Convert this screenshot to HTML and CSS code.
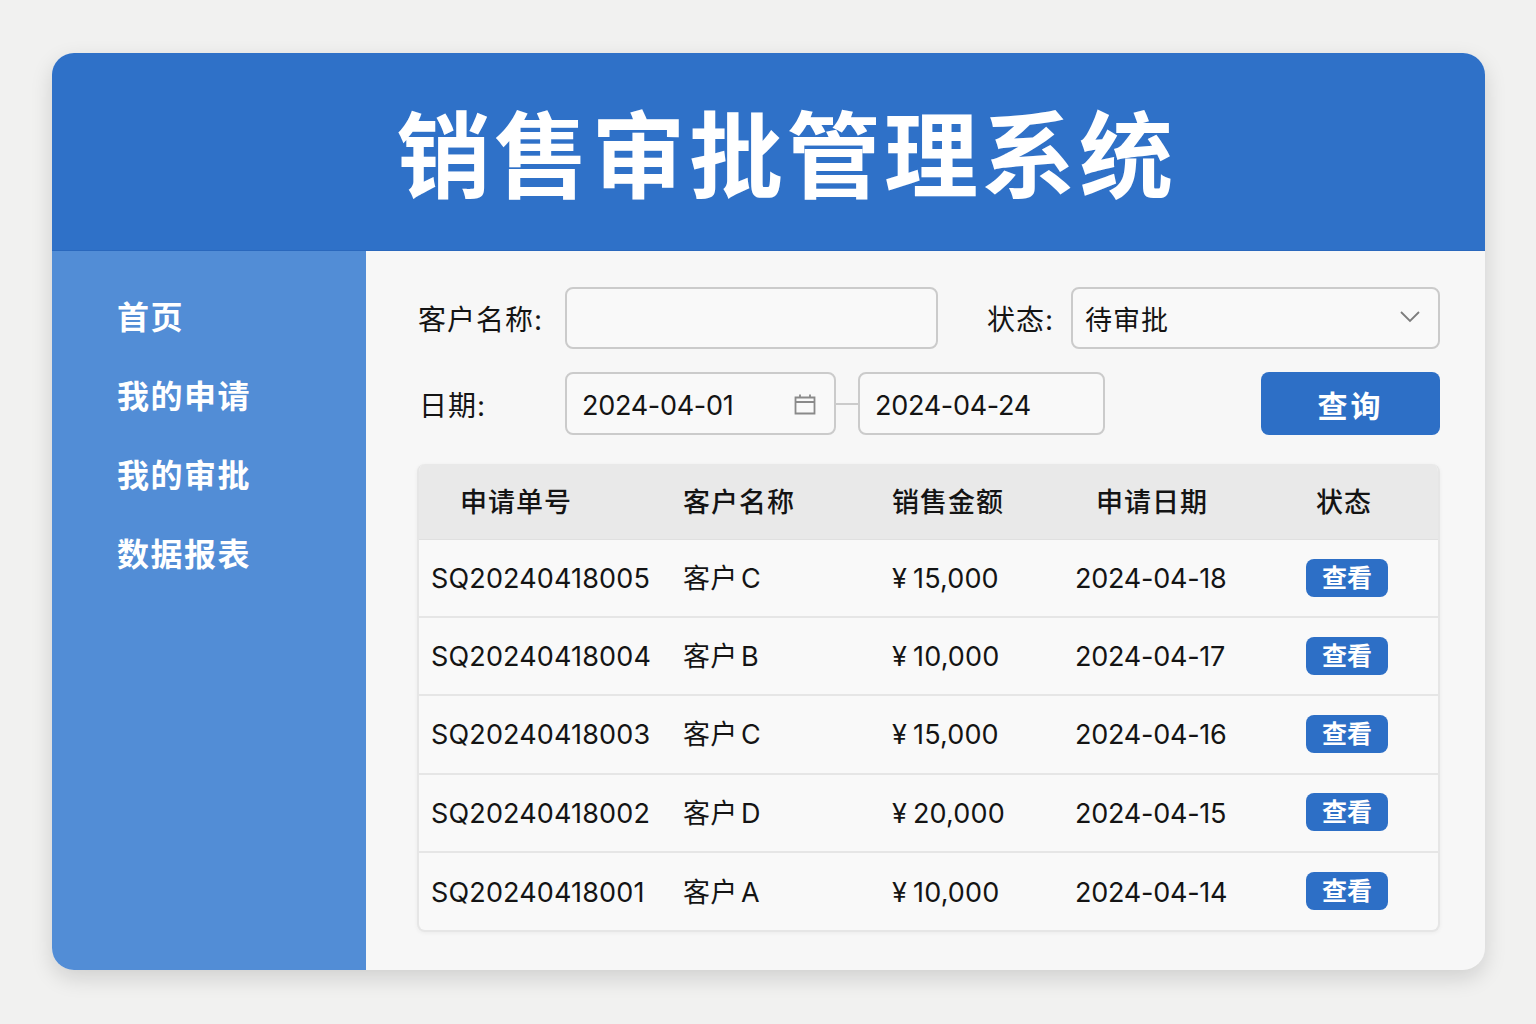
FILE: index.html
```html
<!DOCTYPE html>
<html lang="zh-CN">
<head>
    <meta charset="UTF-8">
    <meta name="viewport" content="width=device-width, initial-scale=1.0">
    <title>销售审批管理系统</title>
    <link rel="stylesheet" href="styles.css">
</head>
<body>
    <div class="app">
        <header class="app-header">
            <h1>销售审批管理系统</h1>
        </header>
        <div class="app-body">
            <nav class="sidebar">
                <a href="#">首页</a>
                <a href="#">我的申请</a>
                <a href="#">我的审批</a>
                <a href="#">数据报表</a>
            </nav>
            <main class="content">
                <div class="filter-row">
                    <label class="filter-label">客户名称:</label>
                    <div class="field field-name"></div>
                    <label class="filter-label label-status">状态:</label>
                    <div class="field field-status">
                        <span>待审批</span>
                        <svg width="24" height="14" viewBox="0 0 24 14"><path d="M3 2l9 9 9-9" fill="none" stroke="#7d7d7d" stroke-width="1.8"/></svg>
                    </div>
                </div>
                <div class="filter-row">
                    <label class="filter-label label-date">日期:</label>
                    <div class="field field-start">
                        <span>2024-04-01</span>
                        <svg width="24" height="24" viewBox="0 0 24 24"><path d="M2.5 5.5h19v16h-19zM2.500 10h19M7 2.500v3M17 2.500v3" fill="none" stroke="#8a8a8a" stroke-width="1.8"/></svg>
                    </div>
                    <div class="date-dash"></div>
                    <div class="field field-end"><span>2024-04-24</span></div>
                    <button type="button" class="btn-search">查询</button>
                </div>
                <div class="table">
                    <div class="row row-head">
                        <div class="col-id">申请单号</div>
                        <div>客户名称</div>
                        <div>销售金额</div>
                        <div class="col-date">申请日期</div>
                        <div class="col-status">状态</div>
                    </div>
                    <div class="row">
                        <div class="col-num">SQ20240418005</div>
                        <div>客户 C</div>
                        <div><span class="yen">¥</span>15,000</div>
                        <div class="col-day">2024-04-18</div>
                        <div class="col-action"><button type="button" class="btn-view">查看</button></div>
                    </div>
                    <div class="row">
                        <div class="col-num">SQ20240418004</div>
                        <div>客户 B</div>
                        <div><span class="yen">¥</span>10,000</div>
                        <div class="col-day">2024-04-17</div>
                        <div class="col-action"><button type="button" class="btn-view">查看</button></div>
                    </div>
                    <div class="row">
                        <div class="col-num">SQ20240418003</div>
                        <div>客户 C</div>
                        <div><span class="yen">¥</span>15,000</div>
                        <div class="col-day">2024-04-16</div>
                        <div class="col-action"><button type="button" class="btn-view">查看</button></div>
                    </div>
                    <div class="row">
                        <div class="col-num">SQ20240418002</div>
                        <div>客户 D</div>
                        <div><span class="yen">¥</span>20,000</div>
                        <div class="col-day">2024-04-15</div>
                        <div class="col-action"><button type="button" class="btn-view">查看</button></div>
                    </div>
                    <div class="row">
                        <div class="col-num">SQ20240418001</div>
                        <div>客户 A</div>
                        <div><span class="yen">¥</span>10,000</div>
                        <div class="col-day">2024-04-14</div>
                        <div class="col-action"><button type="button" class="btn-view">查看</button></div>
                    </div>
                </div>
            </main>
        </div>
    </div>
</body>
</html>
```

FILE: styles.css
```css
* {
    box-sizing: border-box;
}
body {
    margin: 0;
    padding: 53px 0 0 52px;
    height: 1024px;
    overflow: hidden;
    background-color: #f1f1f0;
    color: #141414;
    font-family: Inter, "Noto Sans CJK SC", sans-serif;
}
.app {
    width: 1433px;
    height: 917px;
    border-radius: 22px;
    overflow: hidden;
    background-color: #f7f7f7;
    box-shadow: 0 8px 22px rgba(0, 0, 0, 0.14);
    display: flex;
    flex-direction: column;
}
.app-header {
    height: 198px;
    background-color: #2f71c8;
    border-bottom: 1px solid #2a68bd;
    display: flex;
    align-items: center;
    justify-content: center;
    padding-left: 36px;
}
.app-header h1 {
    margin: 12px 0 0;
    color: #fff;
    font-size: 94px;
    font-weight: 700;
    letter-spacing: 3.5px;
    line-height: 1.2;
}
.app-body {
    flex: 1;
    display: flex;
}
.sidebar {
    width: 314px;
    background-color: #528dd6;
    padding-top: 27px;
    padding-left: 65px;
}
.sidebar a {
    display: block;
    height: 79px;
    line-height: 79px;
    color: #fff;
    font-size: 32px;
    font-weight: 700;
    letter-spacing: 1.5px;
    text-decoration: none;
}
.content {
    flex: 1;
    padding: 36px 45px 0 52px;
}
.filter-row {
    display: flex;
    align-items: center;
    height: 62px;
    margin-bottom: 23px;
}
.filter-row + .filter-row {
    height: 63px;
}
.filter-label {
    width: 147px;
    font-size: 28px;
    letter-spacing: 1px;
    white-space: nowrap;
}
.label-status {
    width: 84px;
    margin-left: 49px;
}
.label-date {
    padding-left: 1px;
}
.field {
    height: 100%;
    border: 2px solid #cbcbcb;
    border-radius: 8px;
    background-color: #f9f9f9;
    font-size: 27px;
    letter-spacing: -0.3px;
    display: flex;
    align-items: center;
    justify-content: space-between;
    padding: 3px 17px 0 15px;
}
.field svg {
    margin-top: -3px;
}
.field-name {
    width: 373px;
}
.field-status {
    width: 369px;
    padding: 0 16px 0 12px;
    letter-spacing: 1px;
}
.field-start {
    width: 271px;
}
.field-end {
    width: 247px;
}
.date-dash {
    width: 22px;
    height: 2px;
    background-color: #cbcbcb;
}
.btn-search {
    width: 179px;
    height: 100%;
    margin-left: auto;
    border: 0;
    border-radius: 8px;
    background-color: #2d6fc6;
    color: #fff;
    font-family: inherit;
    font-size: 30px;
    font-weight: 700;
    letter-spacing: 3px;
}
.table {
    margin-top: 29px;
    margin-left: -1px;
    height: 468px;
    border: 2px solid #e6e6e6;
    border-top: 0;
    border-radius: 8px;
    overflow: hidden;
    background-color: #f9f9f9;
    box-shadow: 0 1px 4px rgba(0, 0, 0, 0.05);
}
.row {
    display: grid;
    grid-template-columns: 264px 209px 183px 183px 1fr;
    align-items: center;
    height: 78.2px;
    padding-top: 2px;
    border-bottom: 2px solid #e6e6e6;
    font-size: 27px;
    line-height: 36px;
    letter-spacing: 0.15px;
    word-spacing: -4px;
}
.row:last-child {
    border-bottom: 0;
}
.col-num {
    padding-left: 12px;
}
.col-day {
    letter-spacing: -0.25px;
}
.yen {
    margin-right: 6px;
}
.row-head {
    height: 76px;
    padding-top: 2px;
    background-color: #e9e9e9;
    border-bottom: 1px solid #e0e0e0;
    font-weight: 500;
    letter-spacing: 1px;
}
.col-id {
    padding-left: 41px;
}
.col-date {
    padding-left: 21px;
}
.col-status {
    padding-left: 58px;
}
.col-action {
    padding-left: 48px;
}
.btn-view {
    display: block;
    width: 82px;
    height: 38px;
    margin-top: -3px;
    padding: 0;
    border: 0;
    border-radius: 8px;
    background-color: #2d6fc6;
    color: #fff;
    font-family: inherit;
    font-size: 25px;
    font-weight: 700;
    line-height: 38px;
}
```
